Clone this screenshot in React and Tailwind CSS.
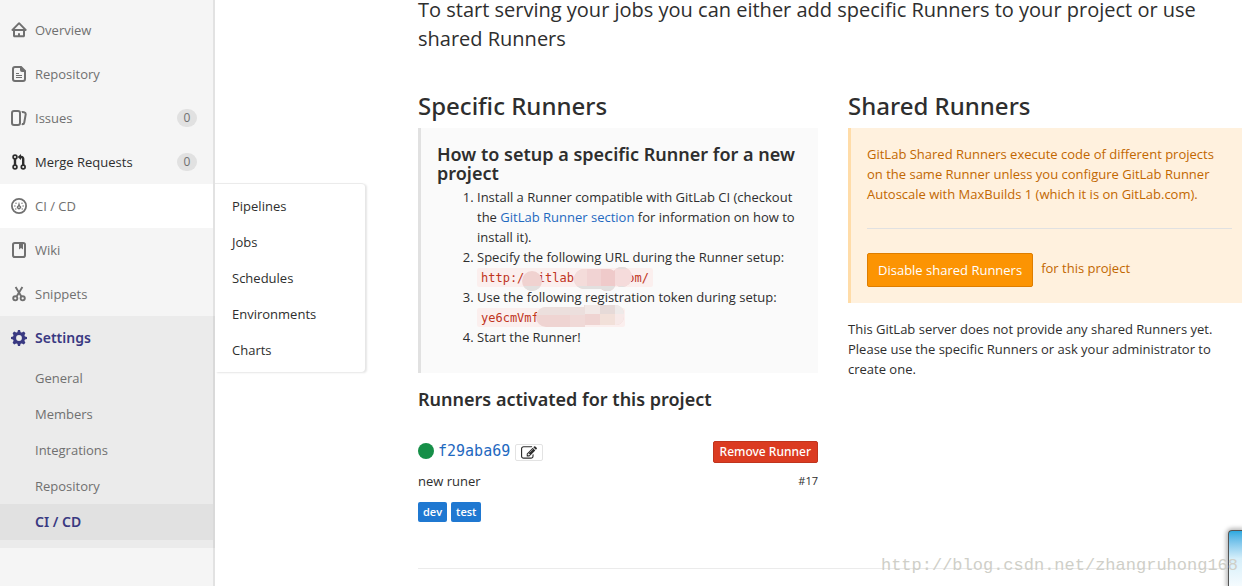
import React from "react";

function Icon({ children }) {
  return (
    <svg viewBox="0 0 16 16" className="size-4 shrink-0" fill="currentColor" aria-hidden="true">
      {children}
    </svg>
  );
}

const HomeIcon = () => (
  <Icon>
    <path d="M3.706 7h8.725L8.069 2.585 3.706 7zM7 13.369V12a1 1 0 0 1 2 0v1.369h3V9H4v4.369h3zM14 9v4.836c0 .833-.657 1.533-1.5 1.533h-9c-.843 0-1.5-.7-1.5-1.533V9h-.448a1.1 1.1 0 0 1-.783-1.873L6.934.887a1.5 1.5 0 0 1 2.269 0l6.165 6.24A1.1 1.1 0 0 1 14.585 9H14z" />
  </Icon>
);

const DocIcon = () => (
  <Icon>
    <path fillRule="evenodd" d="M4 0h6.5L15 4.5V13a3 3 0 0 1-3 3H4a3 3 0 0 1-3-3V3a3 3 0 0 1 3-3zm0 2a1 1 0 0 0-1 1v10a1 1 0 0 0 1 1h8a1 1 0 0 0 1-1V6h-2a2 2 0 0 1-2-2V2H4z" />
    <path d="M5 7h3v1H5zM5 9h6v1H5zM5 11h6v1H5z" />
  </Icon>
);

const IssuesIcon = () => (
  <Icon>
    <path d="M10.458 15.012l.311.055a3 3 0 0 0 3.476-2.433l1.389-7.879A3 3 0 0 0 13.2 1.28L11.23.933a3.002 3.002 0 0 0-.824-.031c.364.59.58 1.28.593 2.02l1.854.328a1 1 0 0 1 .811 1.158l-1.389 7.879a1 1 0 0 1-1.158.81l-.118-.02a3.98 3.98 0 0 1-.541 1.935zM3 0h4a3 3 0 0 1 3 3v10a3 3 0 0 1-3 3H3a3 3 0 0 1-3-3V3a3 3 0 0 1 3-3zm0 2a1 1 0 0 0-1 1v10a1 1 0 0 0 1 1h4a1 1 0 0 0 1-1V3a1 1 0 0 0-1-1H3z" />
  </Icon>
);

const MergeIcon = () => (
  <Icon>
    <g fill="none" stroke="currentColor">
      <circle cx="4" cy="3" r="1.9" strokeWidth="1.7" />
      <circle cx="4" cy="13" r="1.9" strokeWidth="1.7" />
      <circle cx="12.2" cy="13" r="1.9" strokeWidth="1.7" />
      <path d="M4 4.8v6.4M9.5 3h1a1.7 1.7 0 0 1 1.7 1.7v6.5" strokeWidth="2.4" />
    </g>
    <path d="M10 0v6L6.6 3z" />
  </Icon>
);

const PipelineIcon = () => (
  <Icon>
    <circle cx="8" cy="8" r="7.1" fill="none" stroke="currentColor" strokeWidth="1.8" />
    <path d="M8 3.8l1 3.6a2.1 2.1 0 1 1-2 0z" />
    <circle cx="8" cy="9.2" r=".7" fill="white" />
    <circle cx="3.9" cy="8" r=".7" />
    <circle cx="12.1" cy="8" r=".7" />
    <circle cx="5" cy="5.2" r=".7" />
    <circle cx="11" cy="5.2" r=".7" />
    <circle cx="4.8" cy="11" r=".7" />
    <circle cx="11.2" cy="11" r=".7" />
  </Icon>
);

const WikiIcon = () => (
  <Icon>
    <rect x="2" y="1" width="12" height="14" rx="1.8" fill="none" stroke="currentColor" strokeWidth="2" />
    <path d="M8 2h4v5.4L10 6 8 7.4z" />
  </Icon>
);

const SnippetsIcon = () => (
  <Icon>
    <g fill="none" stroke="currentColor" strokeWidth="1.9">
      <circle cx="4.3" cy="12.3" r="2.1" />
      <circle cx="11.7" cy="12.3" r="2.1" />
      <path d="M4.6 1l5.8 9.6M11.4 1L5.6 10.6" />
    </g>
  </Icon>
);

const GearIcon = () => (
  <Icon>
    <circle cx="8" cy="8" r="4.5" fill="none" stroke="currentColor" strokeWidth="3.2" />
    <path d="M6.2 3L7 0h2l.8 3zM6.2 13L7 16h2l.8-3zM3 6.2L0 7v2l3 .8zM13 6.2l3 .8v2l-3 .8zM3 6L1.6 3.2l1.6-1.6L6 3zM10 3l2.8-1.4 1.6 1.6L13 6zM3 10l-1.4 2.8 1.6 1.6L6 13zM13 10l1.4 2.8-1.6 1.6L10 13z" />
  </Icon>
);

const EditIcon = () => (
  <svg viewBox="0 0 1792 1792" className="size-4" fill="currentColor" aria-hidden="true">
    <path d="M888 1184l116-116-152-152-116 116v56h96v96h56zm440-720q-16-16-33 1L945 815q-17 17-1 33t33-1l350-350q17-17 1-33zm80 594v190q0 119-84.500 203.500T1120 1536H288q-119 0-203.500-84.500T0 1248V416q0-119 84.500-203.500T288 128h832q63 0 117 25 15 7 18 23 3 17-9 29l-49 49q-14 14-32 8-23-6-45-6H288q-66 0-113 47t-47 113v832q0 66 47 113t113 47h832q66 0 113-47t47-113v-126q0-13 9-22l64-64q15-15 35-7t20 29zm-96-738l288 288-672 672H640V992zm444 132l-92 92-288-288 92-92q28-28 68-28t68 28l152 152q28 28 28 68t-28 68z" />
  </svg>
);

const navItems = [
  { label: "Overview", icon: HomeIcon },
  { label: "Repository", icon: DocIcon },
  { label: "Issues", icon: IssuesIcon, count: 0 },
  { label: "Merge Requests", icon: MergeIcon, count: 0, dark: true },
  { label: "CI / CD", icon: PipelineIcon, open: true },
  { label: "Wiki", icon: WikiIcon },
  { label: "Snippets", icon: SnippetsIcon },
];
const flyoutItems = ["Pipelines", "Jobs", "Schedules", "Environments", "Charts"];
const settingsItems = ["General", "Members", "Integrations", "Repository"];

function Sidebar() {
  return (
    <nav className="w-[215px] shrink-0 border-r-2 border-[#e2e2e2] bg-[#f5f5f5] pt-2 text-[13px] text-[#707070]">
      <ul>
        {navItems.map(({ label, icon: ItemIcon, count, dark, open }) => (
          <li key={label} className={open ? "relative bg-white" : ""}>
            <a href="#" className={`flex h-11 items-center gap-2 pr-4 pl-[11px] ${dark ? "text-[#2e2e2e]" : ""}`}>
              <ItemIcon />
              <span className="flex-1">{label}</span>
              {count !== undefined && (
                <span className="flex h-[18px] w-5 items-center justify-center rounded-full bg-[#e1e1e1] text-xs text-[#707070]">
                  {count}
                </span>
              )}
            </a>
            {open && (
              <ul className="absolute -top-px left-[215px] z-10 w-[150px] rounded-r border-t border-[#ebebeb] bg-white py-1 text-[#2e2e2e] shadow-[2px_1px_2px_#e6e6e6]">
                {flyoutItems.map((item) => (
                  <li key={item}>
                    <a href="#" className="flex h-9 items-center px-[17px]">{item}</a>
                  </li>
                ))}
              </ul>
            )}
          </li>
        ))}
      </ul>
      <div className="-mr-0.5 border-r-2 border-[#d9d9d9] bg-[#ebebeb] pb-2">
        <a href="#" className="flex h-11 items-center gap-2 pl-[11px] font-['Noto_Sans',sans-serif] text-sm font-semibold text-[#393982]">
          <GearIcon />
          Settings
        </a>
        <ul>
          {settingsItems.map((item) => (
            <li key={item}>
              <a href="#" className="flex h-9 items-center pl-[35px]">{item}</a>
            </li>
          ))}
          <li className="bg-[#e1e1e1]">
            <a href="#" className="flex h-9 items-center pl-[35px] font-['Noto_Sans',sans-serif] text-sm font-semibold text-[#393982]">CI / CD</a>
          </li>
        </ul>
      </div>
    </nav>
  );
}

function UrlMask() {
  return (
    <svg className="absolute -top-1 left-0 h-7 w-44" viewBox="0 0 176 28" aria-hidden="true">
      <defs>
        <clipPath id="url-mask">
          <circle cx="55" cy="17" r="10" />
          <rect x="97" y="5" width="44" height="20" rx="10" />
          <circle cx="130" cy="18" r="9" />
          <circle cx="145" cy="13" r="10" />
        </clipPath>
      </defs>
      <g clipPath="url(#url-mask)">
        <rect width="176" height="28" fill="#f0d2d0" />
        <rect x="97" width="13" height="28" fill="#f4dcda" />
        <rect x="110" width="14" height="28" fill="#f1d3d3" />
        <rect x="124" width="14" height="28" fill="#efcaca" />
        <rect x="138" width="20" height="28" fill="#f5dbdb" />
        <rect x="135" width="22" height="5" fill="#e3dcdc" />
        <rect y="22" width="176" height="6" fill="#e2e0df" />
      </g>
    </svg>
  );
}

function TokenMask() {
  return (
    <svg className="absolute -top-1 left-0 h-7 w-[148px]" viewBox="0 0 148 28" aria-hidden="true">
      <defs>
        <clipPath id="token-mask">
          <path d="M69 3h38V1h32a9 9 0 0 1 8 10v2a8 8 0 0 1-8 8h-31v2H69a10 10 0 0 1 0-20z" />
        </clipPath>
      </defs>
      <g clipPath="url(#token-mask)">
        <rect width="148" height="28" fill="#efd4d2" />
        <rect x="58" width="50" height="11" fill="#ecdfdd" />
        <rect x="108" width="15" height="10" fill="#f2e9e7" />
        <rect x="123" width="15" height="10" fill="#e6dad8" />
        <rect x="138" width="10" height="10" fill="#eeeae9" />
        <rect x="93" y="11" width="15" height="12" fill="#f0d9d7" />
        <rect x="123" y="10" width="15" height="12" fill="#f2e0d9" />
        <rect x="138" y="10" width="10" height="12" fill="#f7e9e8" />
      </g>
    </svg>
  );
}

const codeClass =
  "relative flex h-[19px] items-center rounded-xs bg-[#fbefee] px-1 font-['DejaVu_Sans_Mono','Liberation_Mono',monospace] text-[12px] text-[#c0341d]";

function SpecificRunners() {
  return (
    <section>
      <h2 className="mb-px font-['Noto_Sans',sans-serif] text-2xl leading-[42px] font-medium">Specific Runners</h2>
      <div className="border-l-3 border-[#e1e1e1] bg-[#fafafa] px-4 pt-[17px] pb-[26px]">
        <h3 className="-mr-2 font-['Noto_Sans',sans-serif] text-lg leading-[19px] font-semibold">How to setup a specific Runner for a new project</h3>
        <ol className="mt-1 list-decimal pl-10">
          <li>
            Install a Runner compatible with GitLab CI (checkout the{" "}
            <a href="#" className="text-[#1f69c0]">GitLab Runner section</a> for information on how to install it).
          </li>
          <li>
            Specify the following URL during the Runner setup:
            <div className="flex h-5 items-end">
              <code className={`${codeClass} w-44 justify-between`}>
                <span>http:/</span>
                <span className="-ml-4">itlab</span>
                <span className="ml-6">om/</span>
                <UrlMask />
              </code>
            </div>
          </li>
          <li>
            Use the following registration token during setup:
            <div className="flex h-5 items-end">
              <code className={`${codeClass} w-[148px]`}>
                ye6cmVmf
                <TokenMask />
              </code>
            </div>
          </li>
          <li>Start the Runner!</li>
        </ol>
      </div>

      <h3 className="mt-4 font-['Noto_Sans',sans-serif] text-lg leading-5 font-semibold">Runners activated for this project</h3>
      <div className="mt-[31px] flex items-center justify-between">
        <div className="flex items-center pb-0.5">
          <span className="mr-1 size-4 rounded-full bg-[#168f48]" />
          <a href="#" className="font-['DejaVu_Sans_Mono','Liberation_Mono',monospace] text-[15px] text-[#1f69c0]">f29aba69</a>
          <button type="button" aria-label="Edit runner" className="mt-1 ml-[5px] flex h-[17px] w-7 items-center justify-center rounded-xs border border-[#e3e3e3] bg-white">
            <EditIcon />
          </button>
        </div>
        <button type="button" className="h-[22px] rounded-xs border border-[#c0341d] bg-[#db3b21] px-1.5 font-['Noto_Sans',sans-serif] text-xs font-medium text-white">
          Remove Runner
        </button>
      </div>
      <div className="mt-2 flex justify-between">
        <p>new runer</p>
        <small className="text-[11px] leading-5">#17</small>
      </div>
      <div className="mt-[11px] flex gap-1 text-[11px] font-semibold text-white">
        <span className="rounded-xs bg-[#1f78d1] px-[5px]">dev</span>
        <span className="rounded-xs bg-[#1f78d1] px-[5px]">test</span>
      </div>
    </section>
  );
}

function SharedRunners() {
  return (
    <section>
      <h2 className="mb-px font-['Noto_Sans',sans-serif] text-2xl leading-[42px] font-medium">Shared Runners</h2>
      <div className="border-l-3 border-[#ffdca8] bg-[#fff1de] px-4 py-4 text-[#c26700]">
        <p>
          GitLab Shared Runners execute code of different projects on the same Runner unless you configure GitLab Runner
          Autoscale with MaxBuilds 1 (which it is on GitLab.com).
        </p>
        <hr className="my-6 border-[#e1e1e1]" />
        <div className="flex gap-2">
          <button type="button" className="h-[34px] rounded-xs border border-[#de7e00] bg-[#fc9403] px-2.5 text-white">
            Disable shared Runners
          </button>
          <span className="leading-[30px]">for this project</span>
        </div>
      </div>
      <p className="mt-4">
        This GitLab server does not provide any shared Runners yet. Please use the specific Runners or ask your
        administrator to create one.
      </p>
    </section>
  );
}

export default function App() {
  return (
    <div className="relative flex h-screen overflow-hidden bg-white font-['Open_Sans','Noto_Sans',sans-serif] text-[13px] leading-5 text-[#2e2e2e]">
      <Sidebar />
      <main className="-mr-1.5 min-w-0 flex-1 pl-[203px]">
        <p className="-mt-[5px] text-xl leading-[29px]">
          To start serving your jobs you can either add specific Runners to your project or use shared Runners
        </p>
        <div className="mt-8 grid grid-cols-2 gap-[30px]">
          <SpecificRunners />
          <SharedRunners />
        </div>
        <hr className="mt-[46px] border-[#ebebeb]" />
      </main>
      <div className="absolute right-0 bottom-0 h-14 w-3.5 rounded-tl-sm border-t border-l border-[#555] bg-linear-to-b from-[#29a9e0] via-[#d5effa] via-50% to-[#f5fbfe] shadow-[0_0_4px_2px_#bbb]" />
      <span className="absolute right-1 bottom-2 font-['Liberation_Mono',monospace] text-[17px] leading-6 text-[#cfcfc8]">
        http://blog.csdn.net/zhangruhong168
      </span>
    </div>
  );
}
